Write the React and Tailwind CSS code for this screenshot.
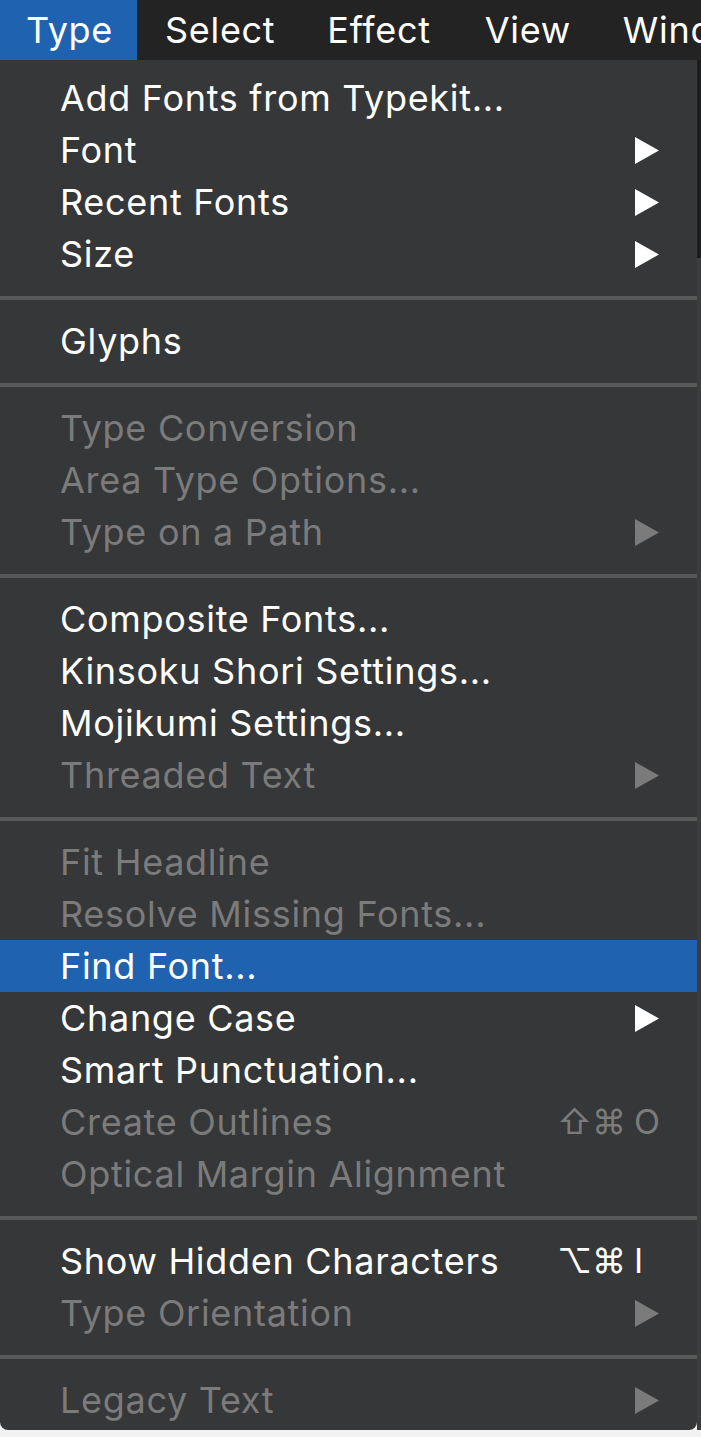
import React from "react";

const font = { fontFamily: "Inter, 'DejaVu Sans', sans-serif" };

function Arrow({ disabled }) {
  return (
    <svg width="24" height="27" viewBox="0 0 24 27" className="block">
      <polygon points="0,0 24,13.5 0,27" fill={disabled ? "#7b7b7b" : "#ffffff"} />
    </svg>
  );
}

function Item({ label, disabled, arrow, mods, keyc, active }) {
  const color = disabled ? "text-[#7b7b7b]" : "text-white";
  return (
    <div
      className={`flex h-[52px] items-center pl-[60px] pr-[38px] ${active ? "bg-[#1f63b0]" : ""}`}
    >
      <span className={`flex-1 whitespace-nowrap text-[36px] leading-none tracking-[0.7px] ${color}`}>{label}</span>
      {arrow && <Arrow disabled={disabled} />}
      {mods && (
        <span className={`flex items-center text-[34px] leading-none ${color}`}>
          <span className="mr-[8px]">{mods}</span>
          <span className="w-[25px]">{keyc}</span>
        </span>
      )}
    </div>
  );
}

function Sep() {
  return (
    <div className="flex h-[35px] items-center">
      <div className="h-[4px] w-full bg-[#585a59]" />
    </div>
  );
}

export default function App() {
  return (
    <div className="h-[1437px] w-[701px] overflow-hidden bg-[#f2f2f2]" style={font}>
      <div className="flex h-[60px] items-center overflow-hidden bg-[#232323] text-[36px] leading-none tracking-[0.7px] text-white">
        <div className="flex h-full w-[137px] shrink-0 items-center bg-[#1f63b0] pl-[26px]">Type</div>
        <div className="shrink-0 pl-[28px]">Select</div>
        <div className="shrink-0 pl-[52px]">Effect</div>
        <div className="shrink-0 pl-[54px]">View</div>
        <div className="shrink-0 whitespace-nowrap pl-[52px]">Window</div>
      </div>
      <div className="flex">
        <div className="h-[1370px] w-[697px] shrink-0 rounded-b-[8px] bg-[#363738] pt-[12px]">
          <Item label="Add Fonts from Typekit..." />
          <Item label="Font" arrow />
          <Item label="Recent Fonts" arrow />
          <Item label="Size" arrow />
          <Sep />
          <Item label="Glyphs" />
          <Sep />
          <Item label="Type Conversion" disabled />
          <Item label="Area Type Options..." disabled />
          <Item label="Type on a Path" disabled arrow />
          <Sep />
          <Item label="Composite Fonts..." />
          <Item label="Kinsoku Shori Settings..." />
          <Item label="Mojikumi Settings..." />
          <Item label="Threaded Text" disabled arrow />
          <Sep />
          <Item label="Fit Headline" disabled />
          <Item label="Resolve Missing Fonts..." disabled />
          <Item label="Find Font..." active />
          <Item label="Change Case" arrow />
          <Item label="Smart Punctuation..." />
          <Item label="Create Outlines" disabled mods="⇧⌘" keyc="O" />
          <Item label="Optical Margin Alignment" disabled />
          <Sep />
          <Item label="Show Hidden Characters" mods="⌥⌘" keyc="I" />
          <Item label="Type Orientation" disabled arrow />
          <Sep />
          <Item label="Legacy Text" disabled arrow />
        </div>
        <div className="flex w-[4px] shrink-0 flex-col">
          <div className="h-[198px] bg-[#1c1c1c]" />
          <div className="h-[1172px] bg-[#3c3c3c]" />
        </div>
      </div>
    </div>
  );
}
